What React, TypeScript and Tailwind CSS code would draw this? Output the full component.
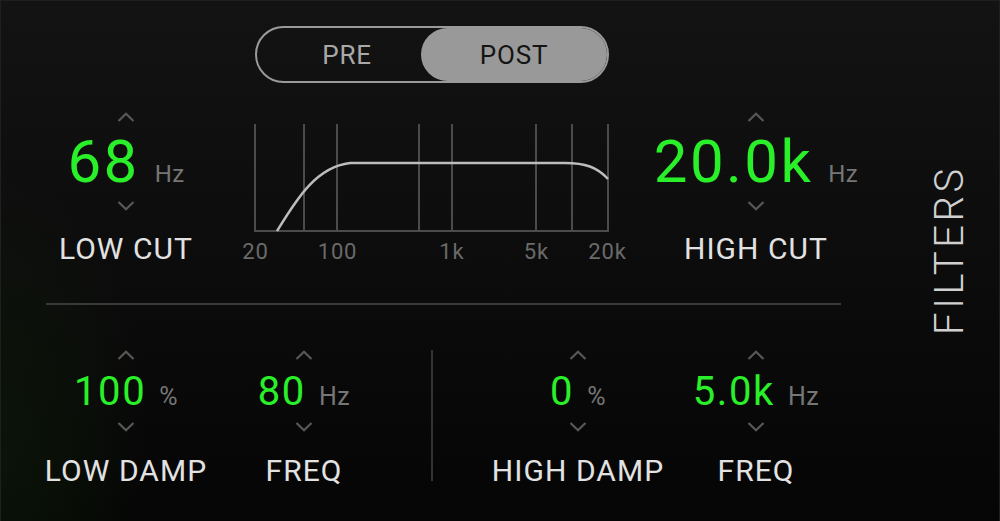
import React from "react";

function ChevronUp() {
  return (
    <svg width="18" height="10" viewBox="0 0 18 10" className="block">
      <polyline points="1.5,9 9,1.8 16.5,9" fill="none" stroke="#585858" strokeWidth="2.2" />
    </svg>
  );
}

function ChevronDown() {
  return (
    <svg width="18" height="10" viewBox="0 0 18 10" className="block">
      <polyline points="1.5,1 9,8.2 16.5,1" fill="none" stroke="#585858" strokeWidth="2.2" />
    </svg>
  );
}

function BigControl({ value, unit, label, width }: { value: string; unit: string; label: string; width: string }) {
  return (
    <div className={`${width} flex flex-col items-center`}>
      <ChevronUp />
      <div className="mt-[10px] h-[60px] flex items-baseline gap-[15px]">
        <span className="text-[60px] leading-none text-[#2af02a] tracking-[0.04em]">{value}</span>
        <span className="text-[24px] leading-none text-[#767676] tracking-[0.02em]">{unit}</span>
      </div>
      <div className="mt-[9px]">
        <ChevronDown />
      </div>
      <div className="mt-[23px] h-[30px] text-[30px] leading-none text-[#e2e2e2] tracking-[0.035em] whitespace-nowrap">
        {label}
      </div>
    </div>
  );
}

function SmallControl({ value, unit, label, width }: { value: string; unit: string; label: string; width: string }) {
  return (
    <div className={`${width} flex flex-col items-center`}>
      <ChevronUp />
      <div className="mt-[12px] h-[40px] flex items-baseline gap-[13px]">
        <span className="text-[40px] leading-none text-[#2af02a] tracking-[0.04em]">{value}</span>
        <span className="text-[25px] leading-none text-[#767676] tracking-[0.02em]">{unit}</span>
      </div>
      <div className="mt-[10px]">
        <ChevronDown />
      </div>
      <div className="mt-[24px] h-[30px] text-[30px] leading-none text-[#e2e2e2] tracking-[0.035em] whitespace-nowrap">
        {label}
      </div>
    </div>
  );
}

function Chart() {
  const lines = [20, 69, 102, 184, 217, 301, 337, 373];
  return (
    <div className="relative w-[400px] h-[152px]">
      <svg width="400" height="152" viewBox="0 0 400 152" className="absolute left-0 top-0">
        {lines.map((x) => (
          <line key={x} x1={x} y1={12} x2={x} y2={120} stroke="#4b4b4b" strokeWidth="2" />
        ))}
        <line x1={19} y1={119} x2={374} y2={119} stroke="#4b4b4b" strokeWidth="2" />
        <path
          d="M42 119 C60 90, 80 55, 115 51 L330 51 C350 51, 362 55, 373 67"
          fill="none"
          stroke="#bdbdbd"
          strokeWidth="2.5"
        />
      </svg>
      <span className="absolute top-[129px] left-[20.5px] -translate-x-1/2 text-[22px] leading-none text-[#6a6a6a] tracking-[0.04em]">20</span>
      <span className="absolute top-[129px] left-[102.5px] -translate-x-1/2 text-[22px] leading-none text-[#6a6a6a] tracking-[0.04em]">100</span>
      <span className="absolute top-[129px] left-[217px] -translate-x-1/2 text-[22px] leading-none text-[#6a6a6a] tracking-[0.04em]">1k</span>
      <span className="absolute top-[129px] left-[301.5px] -translate-x-1/2 text-[22px] leading-none text-[#6a6a6a] tracking-[0.04em]">5k</span>
      <span className="absolute top-[129px] left-[372.5px] -translate-x-1/2 text-[22px] leading-none text-[#6a6a6a] tracking-[0.04em]">20k</span>
    </div>
  );
}

export default function App() {
  return (
    <div className="w-[1000px] h-[521px] overflow-hidden border border-b-0 border-[#1f1f1f] flex font-[Roboto,sans-serif] bg-[image:radial-gradient(150px_300px_at_0%_90%,rgba(35,90,15,0.16),transparent),linear-gradient(#131313,#050505)]">
      <div className="w-[900px] shrink-0 flex flex-col">
        {/* PRE / POST toggle */}
        <div className="mt-[25px] ml-[254px] w-[354px] h-[57px] rounded-full border-2 border-[#9a9a9a] flex">
          <div className="w-[164px] pl-[16px] flex items-center justify-center text-[26px] leading-none text-[#a8a8a8] tracking-[0.03em]">
            PRE
          </div>
          <div className="flex-1 rounded-full bg-[#999999] flex items-center justify-center text-[26px] leading-none text-[#141414] tracking-[0.03em]">
            POST
          </div>
        </div>

        {/* Top row */}
        <div className="mt-[29px] flex items-start">
          <div className="ml-[25px]">
            <BigControl value="68" unit="Hz" label="LOW CUT" width="w-[200px]" />
          </div>
          <div className="ml-[9px]">
            <Chart />
          </div>
          <div className="ml-[1px]">
            <BigControl value="20.0k" unit="Hz" label="HIGH CUT" width="w-[240px]" />
          </div>
        </div>

        {/* Divider */}
        <div className="mt-[39px] ml-[45px] w-[795px] h-[2px] bg-[#393939]" />

        {/* Bottom row */}
        <div className="mt-[45px] flex items-start">
          <div className="ml-[35px]">
            <SmallControl value="100" unit="%" label="LOW DAMP" width="w-[180px]" />
          </div>
          <SmallControl value="80" unit="Hz" label="FREQ" width="w-[176px]" />
          <div className="ml-[39px] w-[2px] h-[131px] bg-[#333333]" />
          <div className="ml-[45px]">
            <SmallControl value="0" unit="%" label="HIGH DAMP" width="w-[200px]" />
          </div>
          <SmallControl value="5.0k" unit="Hz" label="FREQ" width="w-[156px]" />
        </div>
      </div>

      {/* FILTERS side label */}
      <div className="w-[98px] min-w-0 shrink-0 flex items-center justify-center pb-[22px]">
        <span className="shrink-0 -rotate-90 whitespace-nowrap text-[40px] leading-none font-light text-[#d0d0d0] tracking-[0.09em]">
          FILTERS
        </span>
      </div>
    </div>
  );
}
